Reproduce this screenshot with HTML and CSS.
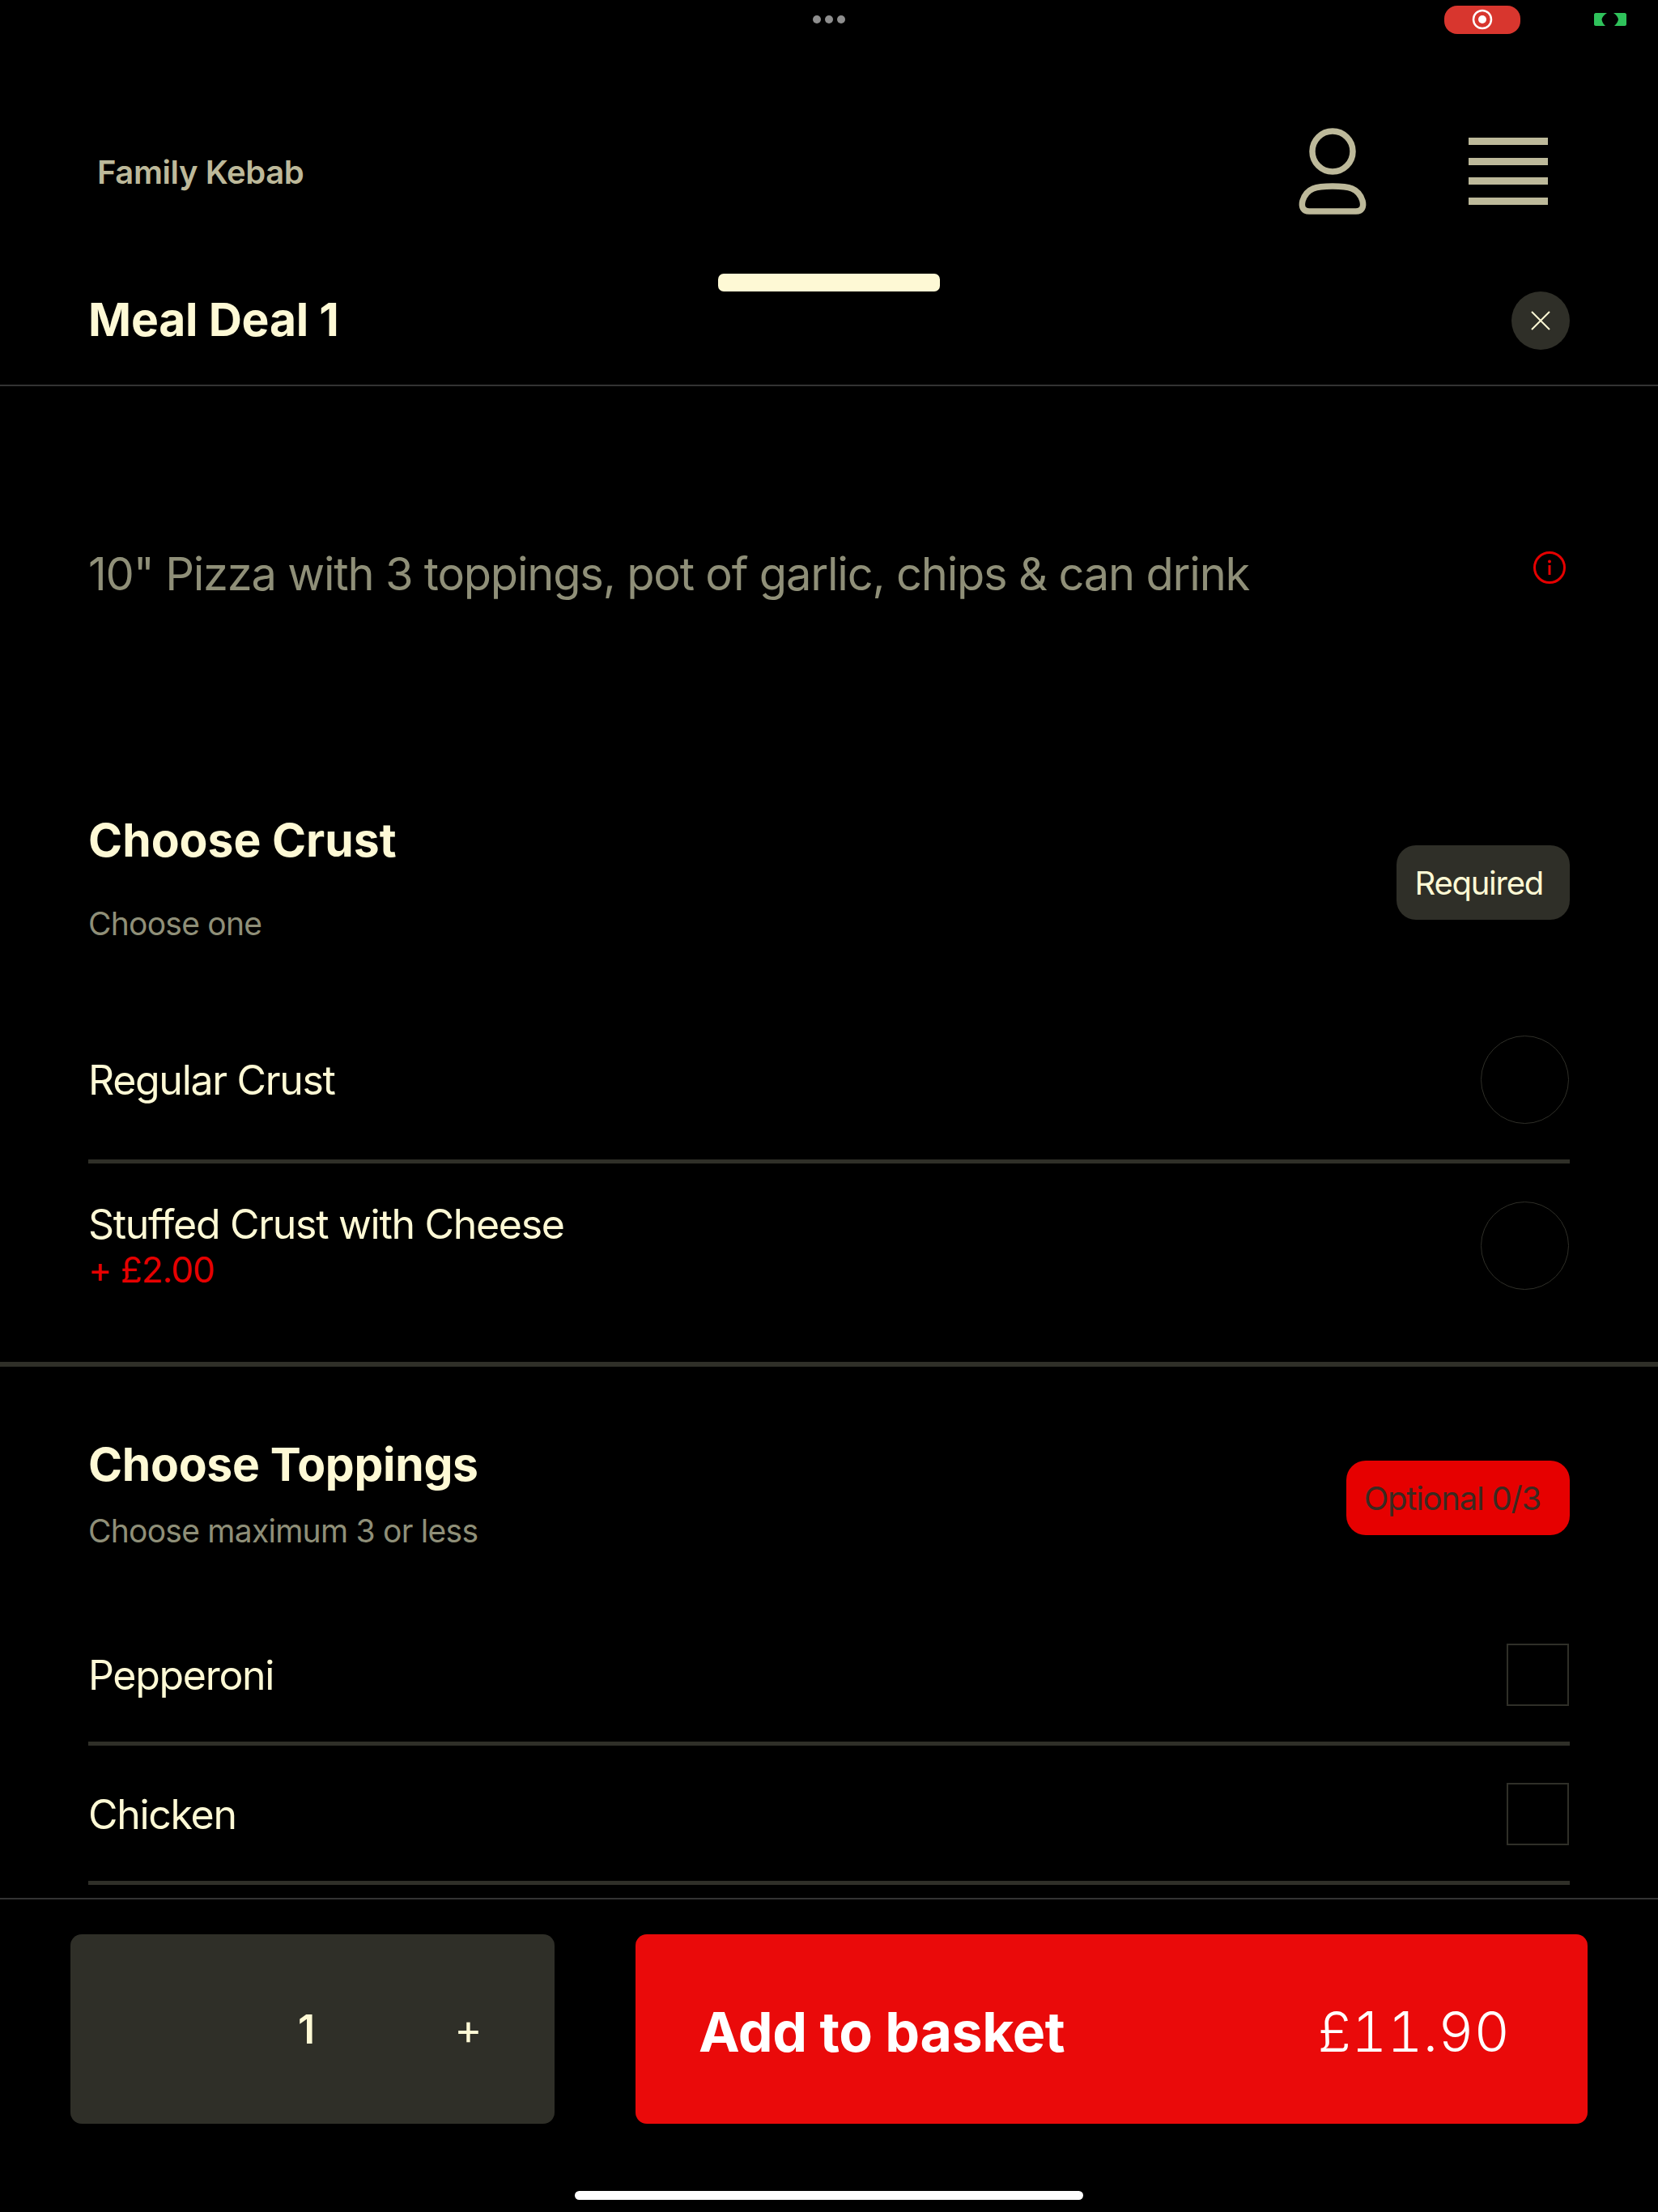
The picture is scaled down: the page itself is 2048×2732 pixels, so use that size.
FILE: index.html
```html
<!DOCTYPE html>
<html lang="en">
<head>
    <meta charset="UTF-8">
    <meta name="viewport" content="width=device-width, initial-scale=1.0">
    <title>Family Kebab - Meal Deal 1</title>
    <link rel="stylesheet" href="styles.css">
</head>
<body>
    <div class="status-bar">
        <div></div>
        <div class="status-dots"><span></span><span></span><span></span></div>
        <div class="status-right">
            <div class="record-pill">
                <svg width="26" height="26" viewBox="0 0 26 26"><circle cx="13" cy="13" r="11" fill="none" stroke="#fff" stroke-width="2.5"/><circle cx="13" cy="13" r="5" fill="#fff"/></svg>
            </div>
            <svg class="cam-icon" width="40" height="16" viewBox="0 0 40 16"><path d="M2 0H16C12 3 10 5 9.500 8C10 11 11 13 14 16H2C1 16 0 15 0 14V2C0 1 1 0 2 0Z" fill="#2fc25b"/><path d="M38 0H24C28 3 29.500 5 30 8C29.500 11 28 13 25 16H38C39 16 40 15 40 14V2C40 1 39 0 38 0Z" fill="#2fc25b"/></svg>
        </div>
    </div>

    <div class="top-nav">
        <div class="brand">Family Kebab</div>
        <div class="nav-icons">
            <svg class="user-icon" width="84" height="107" viewBox="0 0 84 107"><circle cx="42" cy="29" r="25" fill="none" stroke="#bdb99a" stroke-width="7.500"/><path d="M42 72C62 72 74 74 79 90C81 98 78 103 71 103H13C6 103 3 98 5 90C10 74 22 72 42 72Z" fill="none" stroke="#bdb99a" stroke-width="7.500"/></svg>
            <div class="burger"><span></span><span></span><span></span><span></span></div>
        </div>
    </div>

    <div class="sheet">
        <div class="grabber"></div>
        <div class="sheet-head">
            <h1>Meal Deal 1</h1>
            <div class="close-btn">
                <svg width="24" height="24" viewBox="0 0 24 24"><path d="M1 1L23 23M23 1L1 23" stroke="#fef9d5" stroke-width="2"/></svg>
            </div>
        </div>

        <div class="description">
            <p>10" Pizza with 3 toppings, pot of garlic, chips &amp; can drink</p>
            <svg class="info-icon" width="40" height="40" viewBox="0 0 40 40"><circle cx="20" cy="20" r="18.500" fill="none" stroke="#e60000" stroke-width="3"/><circle cx="20" cy="12.500" r="2" fill="#e60000"/><path d="M20 17V29" stroke="#e60000" stroke-width="3"/></svg>
        </div>

        <div class="group group-crust">
            <div class="group-head">
                <div>
                    <h2>Choose Crust</h2>
                    <div class="hint hint-crust">Choose one</div>
                </div>
                <div class="tag">Required</div>
            </div>
            <div class="option option-first">
                <div class="option-name">Regular Crust</div>
                <div class="radio"></div>
            </div>
            <div class="option option-last">
                <div class="option-name">Stuffed Crust with Cheese<div class="option-price">+ £2.00</div></div>
                <div class="radio"></div>
            </div>
        </div>

        <div class="group group-toppings">
            <div class="group-head">
                <div>
                    <h2>Choose Toppings</h2>
                    <div class="hint">Choose maximum 3 or less</div>
                </div>
                <div class="tag tag-red">Optional 0/3</div>
            </div>
            <div class="option topping">
                <div class="option-name">Pepperoni</div>
                <div class="checkbox"></div>
            </div>
            <div class="option topping">
                <div class="option-name">Chicken</div>
                <div class="checkbox"></div>
            </div>
        </div>
    </div>

    <div class="footer">
        <div class="qty">
            <span class="qty-num">1</span>
            <span class="qty-plus">+</span>
        </div>
        <div class="add-btn">
            <span class="add-label">Add to basket</span>
            <span class="add-price">£11.90</span>
        </div>
    </div>
    <div class="home-bar"></div>
</body>
</html>
```

FILE: styles.css
```css
body {
    font-family: Inter, "Liberation Sans", sans-serif;
    margin: 0;
    padding: 0;
    background-color: #000;
    color: #fef9d5;
    width: 2048px;
    height: 2732px;
    overflow: hidden;
    position: relative;
}

h1, h2, p {
    margin: 0;
}

.status-bar {
    display: grid;
    grid-template-columns: 1fr auto 1fr;
    align-items: center;
    height: 48px;
}

.status-dots {
    display: flex;
    gap: 5px;
}

.status-dots span {
    width: 10px;
    height: 10px;
    border-radius: 50%;
    background-color: #8e8e8e;
}

.status-right {
    display: flex;
    justify-content: flex-end;
    align-items: center;
    gap: 91px;
    padding-right: 39px;
}

.record-pill {
    width: 94px;
    height: 35px;
    border-radius: 16px;
    background-color: #d8362e;
    display: flex;
    align-items: center;
    justify-content: center;
}

.cam-icon {
    display: block;
}

.top-nav {
    display: flex;
    justify-content: space-between;
    align-items: center;
    padding: 110px 136px 73px 120px;
}

.brand {
    font-size: 40px;
    font-weight: 600;
    letter-spacing: -0.4px;
    color: #bdb99a;
    padding-top: 2px;
}

.nav-icons {
    display: flex;
    align-items: center;
    gap: 126px;
}

.user-icon {
    display: block;
}

.burger {
    width: 98px;
    display: flex;
    flex-direction: column;
    gap: 15.500px;
}

.burger span {
    display: block;
    height: 9px;
    background-color: #bdb99a;
}

.sheet {
    position: relative;
}

.grabber {
    position: absolute;
    top: 0;
    left: 887px;
    width: 274px;
    height: 22px;
    border-radius: 7px;
    background-color: #fef9d5;
}

.sheet-head {
    display: flex;
    justify-content: space-between;
    align-items: center;
    padding: 22px 109px 43px 109px;
    border-bottom: 2px solid #333;
}

.sheet-head h1 {
    font-size: 57px;
    font-weight: 700;
    letter-spacing: -0.2px;
    line-height: 60px;
    padding-bottom: 3px;
}

.close-btn {
    width: 72px;
    height: 72px;
    border-radius: 50%;
    background-color: #2f2f28;
    display: flex;
    align-items: center;
    justify-content: center;
}

.description {
    display: flex;
    justify-content: space-between;
    align-items: flex-start;
    padding: 204px 114px 0 109px;
}

.description p {
    font-size: 56px;
    letter-spacing: -1.2px;
    color: #8f8f78;
    margin-top: -6px;
}

.info-icon {
    display: block;
}

.group {
    padding: 0 109px;
}

.group-crust {
    margin-top: 260px;
    border-bottom: 6px solid #2f2f28;
}

.group-toppings {
    padding-top: 86px;
}

.group-toppings h2 {
    letter-spacing: -0.3px;
}

.group-toppings .hint {
    margin-top: 24px;
}

.group-toppings .group-head {
    margin-bottom: 70px;
}

.group-head {
    display: flex;
    justify-content: space-between;
    align-items: center;
}

.group-head h2 {
    font-size: 57px;
    font-weight: 700;
}

.hint {
    font-size: 39px;
    letter-spacing: -0.75px;
    color: #8f8f78;
    margin-top: 22px;
}

.hint-crust {
    margin-top: 45px;
}

.tag {
    padding: 0 33px 0 22px;
    height: 92px;
    display: flex;
    align-items: center;
    border-radius: 24px;
    background-color: #2f2f28;
    font-size: 40px;
    letter-spacing: -1.25px;
    margin-top: 13px;
}

.tag-red {
    background-color: #e60000;
    color: #3a2a20;
    padding-right: 36px;
    margin-top: 12px;
}

.option {
    display: flex;
    justify-content: space-between;
    align-items: center;
    font-size: 50px;
    letter-spacing: -1.3px;
}

.option-first {
    padding: 115px 1px 44px 0;
    border-bottom: 5px solid #2f2f28;
}

.option-last {
    padding: 45px 1px 88px 0;
}

.option-name {
    line-height: 60px;
}

.option-price {
    color: #e60000;
    font-size: 44px;
    letter-spacing: -0.9px;
    line-height: 52px;
}

.radio {
    width: 107px;
    height: 107px;
    border: 1px solid #2f2f28;
    border-radius: 50%;
}

.topping {
    padding: 46px 1px 44px 0;
    border-bottom: 5px solid #2f2f28;
}

.checkbox {
    width: 73px;
    height: 73px;
    border: 2px solid #2f2f28;
}

.footer {
    position: absolute;
    left: 0;
    right: 0;
    top: 2344px;
    height: 388px;
    box-sizing: border-box;
    background-color: #000;
    border-top: 2px solid #333;
    padding: 43px 87px 0;
    display: flex;
    gap: 100px;
    align-items: flex-start;
}

.qty {
    width: 598px;
    height: 234px;
    border-radius: 14px;
    background-color: #2f2f28;
    display: flex;
    align-items: center;
    padding-left: 281px;
    box-sizing: border-box;
}

.qty-num {
    font-size: 50px;
    font-weight: 600;
}

.qty-plus {
    font-size: 52px;
    margin-left: 172px;
}

.add-btn {
    flex: 1;
    height: 234px;
    box-sizing: border-box;
    border-radius: 14px;
    background-color: #ea0a0a;
    color: #fff;
    display: flex;
    justify-content: space-between;
    align-items: center;
    padding: 5px 96px 0 78px;
    font-size: 68px;
}

.add-label {
    font-weight: 700;
    letter-spacing: -0.4px;
}

.add-price {
    font-weight: 300;
    font-variant-numeric: tabular-nums;
    letter-spacing: 0.300px;
}

.home-bar {
    position: absolute;
    left: 710px;
    top: 2706px;
    width: 628px;
    height: 11px;
    border-radius: 6px;
    background-color: #fff;
}
```
